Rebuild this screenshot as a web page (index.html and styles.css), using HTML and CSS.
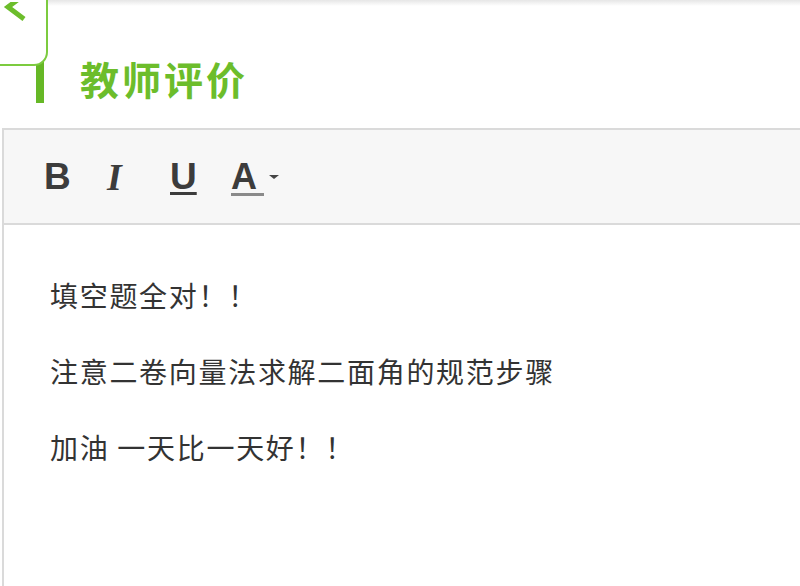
FILE: index.html
```html
<!DOCTYPE html>
<html lang="zh-CN">
<head>
  <meta charset="UTF-8">
  <meta name="viewport" content="width=device-width, initial-scale=1.0">
  <title>教师评价</title>
  <link rel="stylesheet" href="styles.css">
</head>
<body>
  <div class="top-shade"></div>
  <a class="back-btn" href="#">
    <svg width="30" height="24" viewBox="0 0 30 24">
      <polyline points="22,-7 6,5 22,17" fill="none" stroke="#6cbd2b" stroke-width="5" stroke-linejoin="miter"/>
    </svg>
  </a>

  <div class="section-title">
    <span class="title-bar"></span>
    <h1>教师评价</h1>
  </div>

  <div class="editor">
    <div class="toolbar">
      <button class="tool tool-b">B</button>
      <button class="tool tool-i">I</button>
      <button class="tool tool-u">U</button>
      <button class="tool tool-a"><span class="a-letter">A</span><span class="caret"></span></button>
    </div>
    <div class="editor-body">
      <p>填空题全对！！</p>
      <p>注意二卷向量法求解二面角的规范步骤</p>
      <p>加油 一天比一天好！！</p>
    </div>
  </div>
</body>
</html>
```

FILE: styles.css
```css
html, body {
  margin: 0;
  padding: 0;
  background: #fff;
  overflow: hidden;
}
body {
  font-family: "Noto Sans CJK SC", "Liberation Sans", sans-serif;
  position: relative;
  height: 586px;
}
.top-shade {
  height: 6px;
  background: linear-gradient(#e6e6e6, #fff);
}
.back-btn {
  position: absolute;
  left: -60px;
  top: -20px;
  width: 104px;
  height: 82px;
  border: 2px solid #7ccb3f;
  border-radius: 14px;
  background: #fff;
}
.back-btn svg {
  position: absolute;
  left: 60px;
  top: 20px;
}
.section-title {
  display: flex;
  align-items: center;
  margin-top: 52px;
  height: 45px;
}
.title-bar {
  width: 8px;
  height: 45px;
  margin-left: 36px;
  background: #66b826;
}
.section-title h1 {
  margin: -4px 0 0 36px;
  font-size: 39px;
  font-weight: bold;
  color: #6cbd2b;
  line-height: 45px;
  letter-spacing: 3px;
}
.editor {
  margin: 25px 0 0 2px;
  width: 830px;
  border: 2px solid #dadada;
  border-right: none;
  border-bottom: none;
}
.toolbar {
  height: 93px;
  background: #f7f7f7;
  border-bottom: 2px solid #dadada;
  display: flex;
  align-items: center;
  padding-left: 40px;
}
.tool {
  border: none;
  background: none;
  padding: 0;
  color: #3c3c3c;
  font-family: "Liberation Sans", Arial, sans-serif;
  font-weight: bold;
  font-size: 37px;
  line-height: 40px;
  cursor: pointer;
  text-align: left;
}
.tool-b { width: 63px; }
.tool-i {
  width: 63px;
  font-family: "Liberation Serif", serif;
  font-style: italic;
  font-size: 38px;
}
.tool-u {
  width: 61px;
  text-decoration: underline;
  text-underline-offset: 3px;
  text-decoration-thickness: 3px;
}
.tool-a {
  display: flex;
  align-items: center;
  margin-top: 4px;
}
.a-letter {
  display: inline-block;
  border-bottom: 3px solid #8a8a8a;
  padding: 0 7px 0 0;
  line-height: 32px;
  font-size: 36px;
}
.caret {
  width: 0;
  height: 0;
  border-left: 5px solid transparent;
  border-right: 5px solid transparent;
  border-top: 4px solid #444;
  margin-left: 5px;
  margin-top: -4px;
}
.editor-body {
  box-sizing: border-box;
  height: 361px;
  padding: 50px 0 0 46px;
  color: #333;
  font-size: 28px;
  letter-spacing: 1.7px;
}
.editor-body p {
  margin: 0 0 36px;
  line-height: 40px;
}
```
